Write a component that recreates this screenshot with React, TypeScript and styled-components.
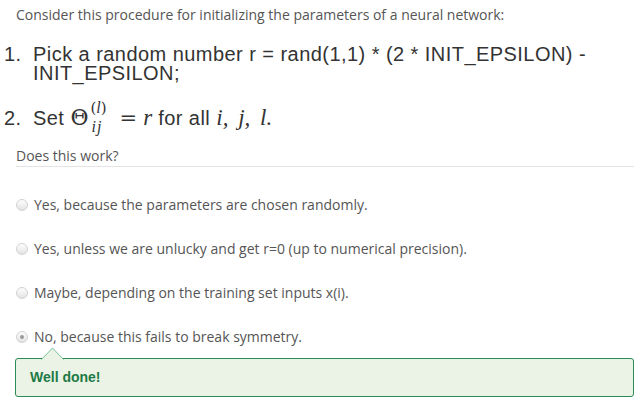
import React from "react";
import styled, { createGlobalStyle } from "styled-components";

const Global = createGlobalStyle`
  html, body { margin: 0; padding: 0; background: #fff; }
  body { font-family: "Open Sans", "Liberation Sans", sans-serif; }
`;

const Page = styled.div`
  width: 638px;
  box-sizing: border-box;
  padding: 6px 4px 0 4px;
`;

const Intro = styled.p`
  margin: 0 0 0 12px;
  font-size: 14px;
  line-height: 18px;
  color: #555;
`;

const Steps = styled.ol`
  list-style: none;
  margin: 21px 0 0 0;
  padding: 0;
  font-family: "Liberation Sans", Arial, sans-serif;
  font-size: 20px;
  letter-spacing: 0.45px;
  line-height: 19px;
  color: #333;
`;

const Step = styled.li<{ $gap?: number }>`
  display: flex;
  align-items: baseline;
  margin-top: ${(p) => p.$gap ?? 0}px;
`;

const Num = styled.span`
  flex: 0 0 29px;
`;

const StepBody = styled.span`
  flex: 1;
  padding-right: 40px;
`;

const Sym = styled.span<{ $size?: number; $ml?: number }>`
  font-family: "DejaVu Serif", "Liberation Serif", serif;
  font-size: ${(p) => p.$size ?? 22}px;
  letter-spacing: 0;
  margin-left: ${(p) => p.$ml ?? 0}px;
`;

const It = styled.span<{ $size?: number; $ml?: number }>`
  font-family: "Liberation Serif", "DejaVu Serif", serif;
  font-style: italic;
  letter-spacing: 0;
  font-size: ${(p) => p.$size ?? 23}px;
  margin-left: ${(p) => p.$ml ?? 0}px;
  word-spacing: 4px;
`;

const Scripts = styled.span`
  display: inline-flex;
  flex-direction: column;
  vertical-align: 12px;
  margin: 0 13px 0 2px;
  font-family: "DejaVu Serif", "Liberation Serif", serif;
  font-size: 15px;
  letter-spacing: 0;
  line-height: 14px;
`;

const Sup = styled.span`
  margin-bottom: 5px;
`;

const ScriptIt = styled.span`
  font-family: "Liberation Serif", serif;
  font-style: italic;
  font-size: 16px;
`;

const Sub = styled.span`
  font-family: "Liberation Serif", serif;
  font-style: italic;
  font-size: 16px;
  padding-left: 1px;
  letter-spacing: 1px;
`;

const Question = styled.div`
  margin: 13px 0 0 12px;
  font-size: 14px;
  line-height: 18px;
  color: #555;
  padding-bottom: 1px;
  border-bottom: 1px solid #e4e4e4;
`;

const Options = styled.div`
  display: flex;
  flex-direction: column;
  gap: 26px;
  margin: 29px 0 0 12px;
`;

const Option = styled.label`
  display: flex;
  align-items: center;
  gap: 6px;
  font-size: 14px;
  line-height: 18px;
  color: #555;
`;

const Radio = styled.span<{ $checked?: boolean }>`
  width: 12px;
  height: 12px;
  box-sizing: border-box;
  border-radius: 50%;
  border: 1px solid #d2d2d2;
  background: linear-gradient(#fdfdfd, #e3e3e3);
  display: flex;
  align-items: center;
  justify-content: center;
  &::after {
    content: "";
    width: 4px;
    height: 4px;
    border-radius: 50%;
    background: #9a9a9a;
    display: ${(p) => (p.$checked ? "block" : "none")};
  }
`;

const Feedback = styled.div`
  position: relative;
  margin: 12px 0 0 11px;
  width: 619px;
  box-sizing: border-box;
  height: 39px;
  border: 1px solid #2b8a55;
  border-radius: 3px;
  background: #ebf3e6;
  padding: 10px 14px;
  font-family: "Liberation Sans", Arial, sans-serif;
  font-weight: bold;
  font-size: 14px;
  line-height: 17px;
  color: #1d7a45;
`;

const Arrow = styled.svg`
  position: absolute;
  left: 25px;
  top: -12px;
`;

const options = [
  "Yes, because the parameters are chosen randomly.",
  "Yes, unless we are unlucky and get r=0 (up to numerical precision).",
  "Maybe, depending on the training set inputs x(i).",
  "No, because this fails to break symmetry.",
];

export default function App() {
  return (
    <>
      <Global />
      <Page>
        <Intro>Consider this procedure for initializing the parameters of a neural network:</Intro>
        <Steps>
          <Step>
            <Num>1.</Num>
            <StepBody>Pick a random number r = rand(1,1) * (2 * INIT_EPSILON) - INIT_EPSILON;</StepBody>
          </Step>
          <Step $gap={18}>
            <Num>2.</Num>
            <StepBody>
              Set <Sym>Θ</Sym>
              <Scripts>
                <Sup>(<ScriptIt>l</ScriptIt>)</Sup>
                <Sub>ij</Sub>
              </Scripts>
              <Sym $size={21}>=</Sym>
              <It $ml={6}>r</It> for all <It>i, j, l</It><It>.</It>
            </StepBody>
          </Step>
        </Steps>
        <Question>Does this work?</Question>
        <Options>
          {options.map((o, i) => (
            <Option key={i}>
              <Radio $checked={i === 3} />
              {o}
            </Option>
          ))}
        </Options>
        <Feedback>
          <Arrow width="24" height="13" viewBox="0 0 24 13">
            <path d="M0.5 12.5 L11.5 1 L22.5 12.5" fill="#ebf3e6" stroke="#72c294" strokeWidth="1" />
            <rect x="1.5" y="12" width="20" height="2" fill="#ebf3e6" />
          </Arrow>
          Well done!
        </Feedback>
      </Page>
    </>
  );
}
